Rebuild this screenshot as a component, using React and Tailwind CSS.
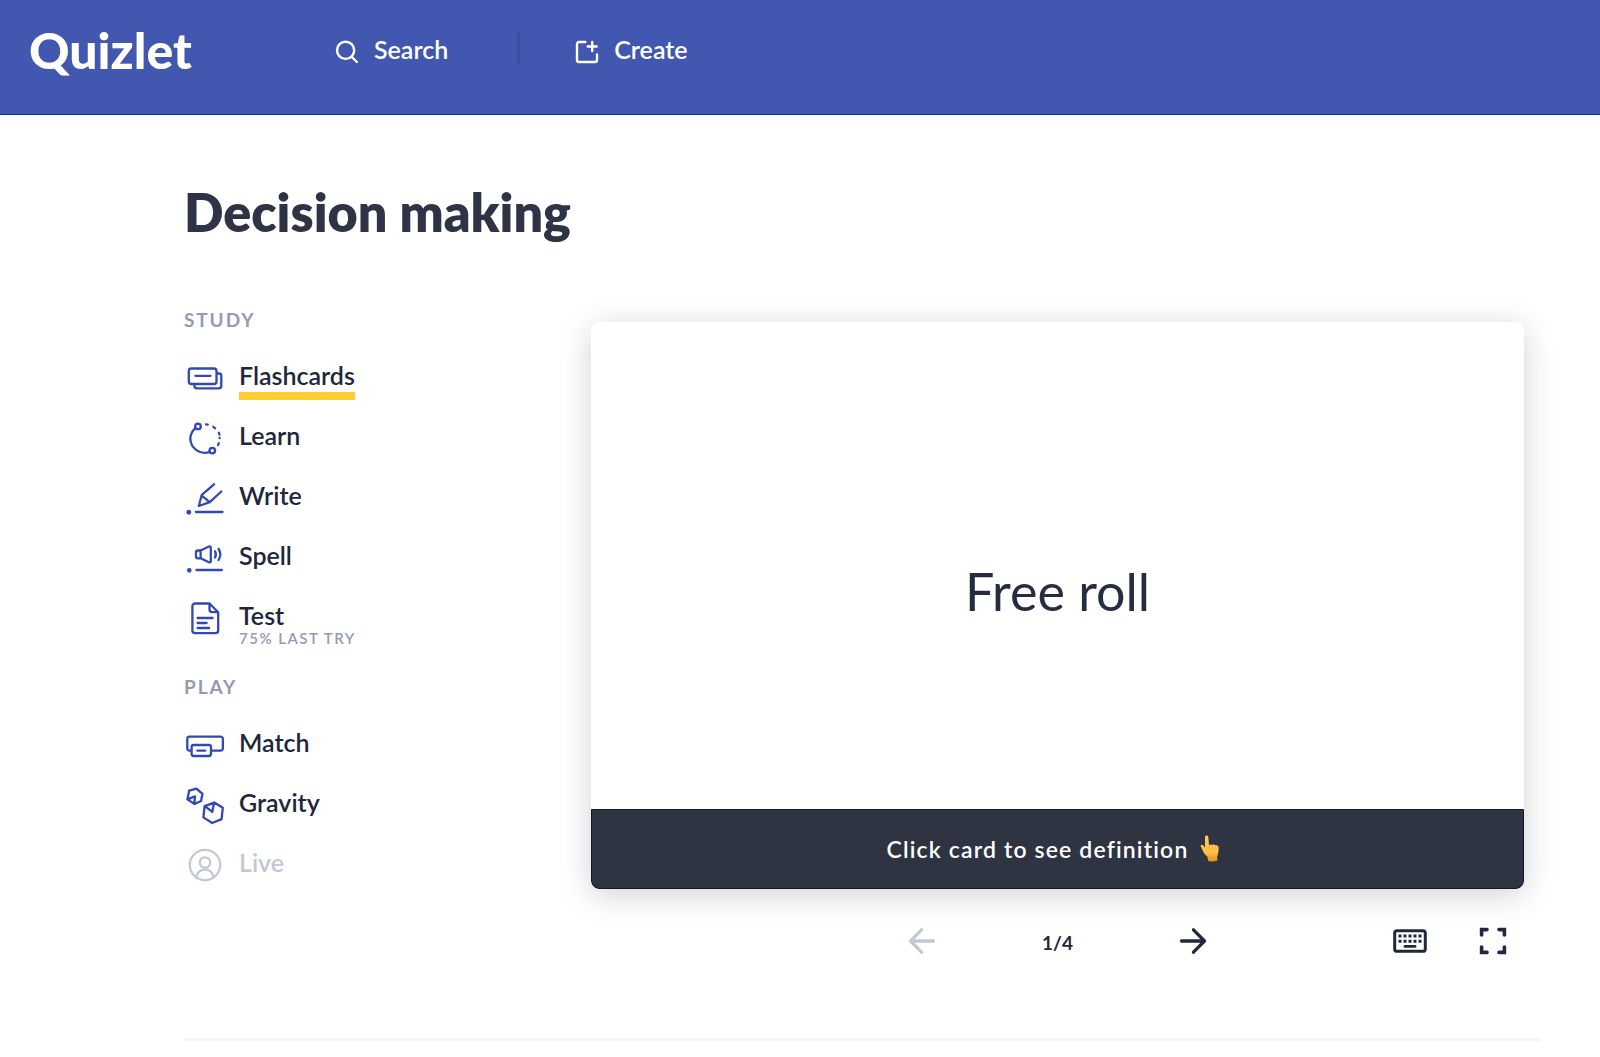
function ModeIcon({ children }) {
  return (
    <svg
      viewBox="0 0 42 60"
      className="w-[42px] h-[60px] flex-shrink-0"
      fill="none"
      stroke="currentColor"
      strokeWidth="2.3"
      strokeLinecap="round"
      strokeLinejoin="round"
      aria-hidden="true"
    >
      {children}
    </svg>
  )
}

const FlashcardsIcon = () => (
  <ModeIcon>
    <rect x="4.8" y="22.5" width="27.7" height="15.5" rx="2.5" />
    <path d="M11.5 29.8h15" />
    <path d="M33.5 27.5h1.5a2.3 2.3 0 0 1 2.3 2.3v10a2.6 2.6 0 0 1-2.6 2.6H13a2.6 2.6 0 0 1-2.6-2.6V38.5" />
  </ModeIcon>
)

const LearnIcon = () => (
  <ModeIcon>
    <path d="M11.5 22.2A14.7 14.7 0 0 0 6.3 32.5 14.7 14.7 0 0 0 25.3 46.2" />
    <circle cx="14" cy="20.4" r="2.8" />
    <circle cx="28.3" cy="44.6" r="2.8" />
    <path d="M22 18.3l1.8 .3M29.3 20.8l1.8 1.5M34.8 26.8l.7 1.8M35.6 31.8v.4M34.8 37.3l-.8 1.8" />
  </ModeIcon>
)

const WriteIcon = () => (
  <ModeIcon>
    <path d="M30 18.3L17.8 28.8 14.8 40l11-3.8L37.3 25.5M17.6 29.6l8.2 6.6" />
    <path d="M12 46h26.5" />
    <circle cx="4.8" cy="46.3" r="1.3" fill="currentColor" />
  </ModeIcon>
)

const SpellIcon = () => (
  <ModeIcon>
    <path d="M16.6 24.5h-2.8a1.8 1.8 0 0 0-1.8 1.8v4.2a1.8 1.8 0 0 0 1.8 1.8h2.8zM16.6 24.5l8.3-4a1.3 1.3 0 0 1 1.9 1.1v13.6a1.3 1.3 0 0 1-1.9 1.1l-8.3-4" />
    <path d="M31 25.3q1.7 3.1 0 6.2M34.6 23q3.5 5.4 0 11" />
    <path d="M12.5 44h25.3" />
    <circle cx="5.3" cy="44.3" r="1.2" fill="currentColor" />
  </ModeIcon>
)

const TestIcon = () => (
  <ModeIcon>
    <path d="M25.5 17.5H11a2.6 2.6 0 0 0-2.6 2.6v24.4a2.6 2.6 0 0 0 2.6 2.6h20.6a2.6 2.6 0 0 0 2.6-2.6V26.2zM25.5 17.5v6a2.6 2.6 0 0 0 2.6 2.6h6" />
    <path d="M13.6 32h15M13.6 37h9M13.6 42h11.5" />
  </ModeIcon>
)

const MatchIcon = () => (
  <ModeIcon>
    <path d="M6.5 37.6H5.6a2.3 2.3 0 0 1-2.3-2.3v-9.4a2.3 2.3 0 0 1 2.3-2.3h31a2.3 2.3 0 0 1 2.3 2.3v9.4a2.3 2.3 0 0 1-2.3 2.3h-8.5" />
    <rect x="7.6" y="32" width="19.4" height="11" rx="2.2" />
    <path d="M13.3 37.6h8" />
  </ModeIcon>
)

const GravityIcon = () => (
  <ModeIcon>
    <path d="M5.2 17.6L12.4 15.6 18.5 20.8 17 28 10.6 31 3.4 26.4zM3.4 26.4L11 23.4 10.3 30.6" />
    <path d="M30.2 29.6l8.6 5.1-1.2 11.4-9.4 3.9-8.8-5.6 1.2-11.3zM20.9 33.2l7.4 5.6 1.8-9" />
  </ModeIcon>
)

const LiveIcon = () => (
  <ModeIcon>
    <circle cx="21" cy="32" r="15.2" />
    <circle cx="21" cy="29.5" r="5.2" />
    <path d="M12.3 44.3c.9-5 4.4-7.6 8.7-7.6s7.8 2.6 8.7 7.6" />
  </ModeIcon>
)

const study = [
  { label: 'Flashcards', Icon: FlashcardsIcon, active: true },
  { label: 'Learn', Icon: LearnIcon },
  { label: 'Write', Icon: WriteIcon },
  { label: 'Spell', Icon: SpellIcon },
  { label: 'Test', Icon: TestIcon, note: '75% LAST TRY' },
]

const play = [
  { label: 'Match', Icon: MatchIcon },
  { label: 'Gravity', Icon: GravityIcon },
  { label: 'Live', Icon: LiveIcon, disabled: true },
]

function ModeList({ title, items }) {
  return (
    <section>
      <h2 className="text-[19px] leading-[30px] font-bold tracking-widest text-[#939bb4] mb-[11px]">{title}</h2>
      <ul>
        {items.map(({ label, Icon, active, disabled, note }) => (
          <li key={label}>
            <a
              href="#"
              aria-current={active ? 'page' : undefined}
              aria-disabled={disabled}
              className={`flex gap-[13px] h-[60px] ${disabled ? 'text-[#c3c8d6]' : 'text-[#3049b4]'}`}
            >
              <Icon />
              <span className="flex flex-col items-start pt-3">
                <span
                  className={`text-[25px] leading-[34px] font-semibold ${disabled ? '' : 'text-[#20263c]'} ${active ? 'border-b-8 border-[#ffcd32]' : ''}`}
                >
                  {label}
                </span>
                {note && <span className="text-[15px] leading-3 font-semibold tracking-widest text-[#939bb4]">{note}</span>}
              </span>
            </a>
          </li>
        ))}
      </ul>
    </section>
  )
}

function Header() {
  return (
    <header className="h-[115px] bg-[#4257af] border-b border-[#0033a8] text-white">
      <div className="flex items-center h-[100px] pl-[29px]">
        <a href="#" className="w-[306px] text-[50px] leading-none font-black">Quizlet</a>
        <button className="flex items-center gap-[15px] text-[25px] font-semibold">
          <svg viewBox="0 0 24 24" className="w-6 h-6 mt-1" fill="none" stroke="currentColor" strokeWidth="2.4" strokeLinecap="round" aria-hidden="true">
            <circle cx="10.6" cy="10.3" r="8.6" />
            <path d="M16.7 16.8l5.2 5.2" />
          </svg>
          Search
        </button>
        <div className="w-[3px] h-8 ml-[69px] mr-[55px] mb-1 bg-[#3c4f9f]" />
        <button className="flex items-center gap-[15px] text-[25px] font-semibold">
          <svg viewBox="0 0 24 24" className="w-6 h-6 mt-1" fill="none" stroke="currentColor" strokeWidth="2.4" strokeLinecap="round" strokeLinejoin="round" aria-hidden="true">
            <path d="M10.3 2H4a2 2 0 0 0-2 2v16a2 2 0 0 0 2 2h16a2 2 0 0 0 2-2v-5.5M17.2 2v9M12.7 6.5h9" />
          </svg>
          Create
        </button>
      </div>
    </header>
  )
}

function PointingHand() {
  return (
    <svg viewBox="0 0 20 28" className="w-5 h-7" role="img" aria-label="Pointing up">
      <defs>
        <linearGradient id="hand" x1="0" y1="0" x2="0" y2="1">
          <stop offset="0" stopColor="#ffd257" />
          <stop offset="0.65" stopColor="#fdbf3e" />
          <stop offset="1" stopColor="#e8901c" />
        </linearGradient>
      </defs>
      <path
        d="M5 2.2C5 .9 5.8.4 6.6.4s1.6.5 1.7 1.8l.7 8c1-1 2.5-1 3.5-.2 1-.7 2.5-.5 3.2.5 1.6-.5 2.9.5 2.9 2.3 0 3.5-.3 6.2-1.4 8.6l.2 3.6c0 1.8-9.4 2-9.4.2l-.4-3.4C4.9 19.8 3.6 17.6 2.5 14.9L.8 11.6c-.6-1.5 1.1-2.5 2.2-1.4l2 2.2z"
        fill="url(#hand)"
      />
      <path d="M9 10.4l.3 3.8M12.5 10.3l.2 3.9M15.7 10.8l-.1 3.4M7.2 22.4c2.6 1.3 6.6 1.3 9.4-.3" fill="none" stroke="#e59a27" strokeWidth=".5" strokeLinecap="round" />
    </svg>
  )
}

function Arrow({ d }) {
  return (
    <svg viewBox="0 0 28 28" className="w-7 h-7" fill="none" stroke="currentColor" strokeWidth="3.3" strokeLinecap="round" strokeLinejoin="round" aria-hidden="true">
      <path d={d} />
    </svg>
  )
}

function KeyboardIcon() {
  const keys = [7, 12, 17, 22, 27]
  return (
    <svg viewBox="0 0 34 24" className="w-[34px] h-6" fill="none" stroke="currentColor" aria-hidden="true">
      <rect x="1.7" y="1.7" width="30.6" height="20.6" rx="2.4" strokeWidth="3" />
      {keys.map(x => (
        <path key={x} d={`M${x} 5.5v3M${x} 10.7v3`} strokeWidth="3" />
      ))}
      <path d="M12 17.4h10" strokeWidth="2.8" strokeLinecap="round" />
    </svg>
  )
}

function FullscreenIcon() {
  return (
    <svg viewBox="0 0 28 28" className="w-7 h-7" fill="none" stroke="currentColor" strokeWidth="3.6" strokeLinecap="round" aria-hidden="true">
      <path d="M2.6 8V2.6H8M20 2.6h5.4V8M25.4 20v5.4H20M8 25.4H2.6V20" />
    </svg>
  )
}

function CardViewer() {
  return (
    <div className="flex-1 mt-[17px] mr-[17px]">
      <button className="flex flex-col w-full rounded-lg overflow-hidden bg-white shadow-[0_6px_32px_rgba(0,0,0,0.18)]">
        <span className="flex items-center justify-center w-full h-[487px] pt-[50px] text-[52px] font-normal text-[#262c42]">
          Free roll
        </span>
        <span className="flex items-center justify-center gap-3 w-full h-20 pr-2 bg-[#2f3443] border border-[#10162c] rounded-b-lg text-[23px] font-semibold tracking-wider text-white">
          Click card to see definition
          <PointingHand />
        </span>
      </button>

      <div className="grid grid-cols-[1fr_auto_1fr] items-center h-8 mt-9 text-[#22283c]">
        <div />
        <div className="flex items-center justify-between w-[299px]">
          <button disabled aria-label="Previous card" className="text-[#c3c8d6]">
            <Arrow d="M13.5 2.8L2.5 14l11 11.200M2.5 14H25.5" />
          </button>
          <span className="pt-1 text-[19px] font-bold">1/4</span>
          <button aria-label="Next card">
            <Arrow d="M14.5 2.8L25.5 14l-11 11.200M25.5 14H2.5" />
          </button>
        </div>
        <div className="flex items-center justify-end gap-[52px] pr-[17px]">
          <button aria-label="Keyboard shortcuts"><KeyboardIcon /></button>
          <button aria-label="Fullscreen"><FullscreenIcon /></button>
        </div>
      </div>
    </div>
  )
}

export default function App() {
  return (
    <div className="min-h-screen bg-white font-['Lato',sans-serif]">
      <Header />
      <main className="pl-[184px] pr-[59px] pt-[67px]">
        <h1 className="text-[52px] leading-[60px] font-extrabold text-[#2e3445]">Decision making</h1>
        <div className="flex items-start mt-[63px] pb-[81px] border-b-[3px] border-[#f5f6fb]">
          <nav className="flex flex-col gap-[26px] w-[407px]" aria-label="Study modes">
            <ModeList title="STUDY" items={study} />
            <ModeList title="PLAY" items={play} />
          </nav>
          <CardViewer />
        </div>
      </main>
    </div>
  )
}
